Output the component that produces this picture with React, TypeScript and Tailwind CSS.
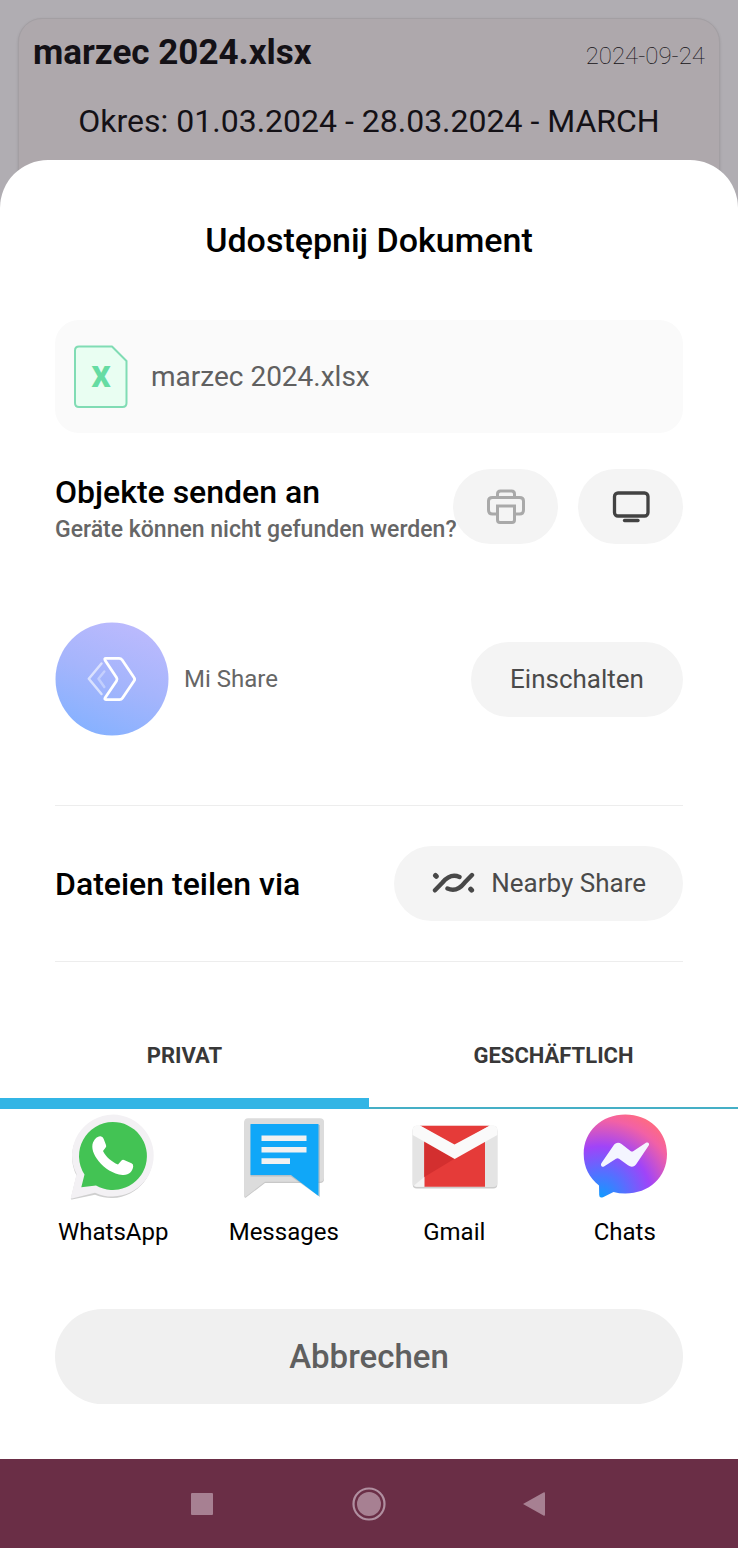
import React from "react";

function SheetFileIcon() {
  return (
    <div className="relative h-16 w-14 shrink-0">
      <svg viewBox="0 0 56 64" className="h-16 w-14" aria-hidden="true">
        <path
          d="M6 1.500H39L53.500 16V58Q53.500 62 49.500 62H6Q2 62 2 58V5.500Q2 1.500 6 1.500Z"
          fill="#e9fef2"
          stroke="#80dcb4"
          strokeWidth="2"
          strokeLinejoin="round"
        />
      </svg>
      <span className="absolute inset-0 flex items-center justify-center text-3xl font-black text-[#66dca3]">
        X
      </span>
    </div>
  );
}

function PrinterIcon() {
  return (
    <svg viewBox="0 0 40 36" className="h-9 w-10" fill="none" stroke="#a9a9a9" strokeWidth="3" aria-hidden="true">
      <path d="M11.500 8V5Q11.500 2 14.500 2H25.500Q28.500 2 28.500 5V8" />
      <path d="M10.500 25H6.500Q2.500 25 2.500 21V12Q2.500 8.500 6.500 8.500H33.500Q37.500 8.500 37.500 12V21Q37.500 25 33.500 25H29.500" />
      <path d="M11.500 17H28.500V31Q28.500 33.500 26 33.500H14Q11.500 33.500 11.500 31Z" />
    </svg>
  );
}

function ScreenIcon() {
  return (
    <svg viewBox="0 0 40 36" className="h-9 w-10" fill="none" stroke="#424242" strokeWidth="3.300" aria-hidden="true">
      <rect x="3.500" y="4" width="33.500" height="23" rx="3.500" />
      <path d="M13.500 31.500H27" strokeLinecap="round" />
    </svg>
  );
}

function MiShareIcon() {
  return (
    <svg viewBox="0 0 114 114" className="size-[114px] shrink-0" fill="none" aria-hidden="true">
      <defs>
        <linearGradient id="mi" x1="0.700" y1="0" x2="0.300" y2="1">
          <stop offset="0" stopColor="#bcbafd" />
          <stop offset="0.500" stopColor="#a5b5fc" />
          <stop offset="1" stopColor="#85b1ff" />
        </linearGradient>
      </defs>
      <circle cx="57" cy="57" r="56.500" fill="url(#mi)" />
      <g strokeLinecap="round" strokeLinejoin="round">
        <path d="M49.300 49.500L43.500 56.700L49.300 65" stroke="#fff" strokeOpacity="0.350" strokeWidth="2.500" />
        <path d="M46.500 41.500L33.800 56.700L46.500 72" stroke="#fff" strokeOpacity="0.600" strokeWidth="2.500" />
        <path
          d="M51 36.300H64Q66 36.300 67.200 38L79 55.500Q80.300 57.300 79 59L67.500 76Q66.500 77.600 64.500 77.600H51Q49 77.600 50.300 75.500L61.500 59Q62.700 57.300 61.500 55.500L50.200 38.500Q49 36.300 51 36.300Z"
          stroke="#fff"
          strokeWidth="2.800"
        />
      </g>
    </svg>
  );
}

function NearbyIcon() {
  return (
    <svg viewBox="0 0 44 24" className="h-6 w-11" fill="none" stroke="#484848" strokeLinecap="round" aria-hidden="true">
      <path d="M4 18.300L11.500 10.500C17 4 23 2.500 28.500 5" strokeWidth="4.400" />
      <path d="M41 3L33.500 10.800C28 17.700 22 19 16.500 16.500" strokeWidth="4.400" />
      <path d="M4.500 3.500L5.300 4.300M39.700 17.200L40.600 18.200" strokeWidth="5" />
    </svg>
  );
}

function WhatsAppIcon() {
  return (
    <svg viewBox="0 0 88 88" className="size-[88px]" aria-hidden="true">
      <path
        d="M44 4A41.500 41 0 1 1 26 82.700L3 87.500Q1.500 87.500 2 86L7.500 63.500A41.500 41 0 0 1 44 4Z"
        fill="#cfcfcf"
      />
      <path
        d="M44 2.500A41.500 41 0 1 1 26 80.800L3 86.500Q1.500 86.500 2 85L7.500 62A41.500 41 0 0 1 44 2.500Z"
        fill="#f3f1f4"
      />
      <path d="M43.700 10A34 34 0 1 1 27 73.500L12.300 75.300L15.500 62.500A34 34 0 0 1 43.700 10Z" fill="#43c354" />
      <path
        d="M24 30.500C26 26 29 24 31.500 24.300Q33.800 24.500 34.600 26.700L37 33Q37.600 34.500 36.500 35.800L34 39C37 45 42.500 49.800 49 52.500L52.500 48.500Q53.500 47.500 55 48L62.500 51.300Q64.500 52.200 64.200 54.500C63.500 59.500 60 63.500 53.500 63C44 62 35.500 56.500 29.500 49C24.500 42.500 22 36 24 30.500Z"
        fill="#fff"
      />
    </svg>
  );
}

function MessagesIcon() {
  return (
    <svg viewBox="0 0 88 88" className="size-[88px]" aria-hidden="true">
      <path d="M8 7.500H80Q84 7.500 84 11V67Q84 71 80 71H25L6 85.500Q4.300 86.500 4.300 84V11Q4.300 7.500 8 7.500Z" fill="#c8c8c8" />
      <path d="M8 6.300H80Q84 6.300 84 10V66Q84 69.700 80 69.700H25L6 84.500Q4.300 85.500 4.300 83V10Q4.300 6.300 8 6.300Z" fill="#dcdcdc" />
      <path d="M10.500 13H80V85L51 64.500H10.500Z" fill="#8da5b4" opacity="0.500" />
      <path d="M10.500 12H78.500V84L51 63H10.500Z" fill="#10a7f8" />
      <path d="M21.500 23.500H66.500V29H21.500ZM21.500 35H66.500V40.500H21.500ZM21.500 46.300H50V52H21.500Z" fill="#f1f1f1" />
    </svg>
  );
}

function GmailIcon() {
  return (
    <svg viewBox="0 0 88 88" className="size-[88px]" aria-hidden="true">
      <rect x="2.700" y="15" width="84.600" height="61.500" rx="4" fill="#cccccc" />
      <rect x="2.700" y="13.700" width="84.600" height="61.300" rx="4" fill="#e4e4e4" />
      <path d="M14.300 28H75V74.800H14.300Z" fill="#e53b39" />
      <path d="M14.300 30L44.500 46.700L14.300 65Z" fill="#d32f2f" />
      <path d="M4 73.500L14.300 65V74.800H6Z" fill="#f4f4f4" />
      <path d="M10 13.700H79.500L44.700 34Z" fill="#e53b39" />
      <path
        d="M2.700 23V18Q2.700 13.700 7 13.700H10.500L44.500 32.500L79.500 13.700H83Q87.300 13.700 87.300 18V23L44.700 47Z"
        fill="#fafafa"
      />
    </svg>
  );
}

function MessengerIcon() {
  return (
    <svg viewBox="0 0 88 88" className="size-[88px]" aria-hidden="true">
      <defs>
        <radialGradient id="chat" cx="0.200" cy="1" r="1.100">
          <stop offset="0" stopColor="#0f9bff" />
          <stop offset="0.300" stopColor="#5b6cff" />
          <stop offset="0.560" stopColor="#a044f8" />
          <stop offset="0.850" stopColor="#f261a5" />
          <stop offset="1" stopColor="#ff6b80" />
        </radialGradient>
      </defs>
      <path
        d="M44.300 2.500C68 2.500 86 19 86 42C86 65.500 68 81.500 44.300 81.500Q38 81.500 32.500 80L22 85.200Q18.300 86.500 18.200 83L18 73.500C8.500 66 2.700 55.500 2.700 42C2.700 19 20.500 2.500 44.300 2.500Z"
        fill="url(#chat)"
      />
      <path
        d="M20.500 51L32.500 33.500C34.500 30.500 37.700 30 40.500 32L49.500 39Q51 40 52.500 39L65 30.800C67 29.500 69 31.500 67.700 33.500L55.500 51.800C53.500 55 50 55.500 47 53.300L38 46.700Q36.500 45.700 35 46.700L23 54.400C21 55.700 19 53.300 20.500 51Z"
        fill="#f4f5ff"
      />
    </svg>
  );
}

const apps = [
  { name: "WhatsApp", Icon: WhatsAppIcon },
  { name: "Messages", Icon: MessagesIcon },
  { name: "Gmail", Icon: GmailIcon },
  { name: "Chats", Icon: MessengerIcon },
];

export default function App() {
  return (
    <div className="flex min-h-screen flex-col bg-[#b0adb2] font-['Roboto',sans-serif] text-black">
      <header className="px-[18px] pt-[18px]">
        <article className="rounded-3xl border border-[#a39fa3] bg-[#aea8ac] px-3.5 pb-[70px] text-[#141116] shadow-sm">
          <div className="flex items-center justify-between pt-3.5">
            <h1 className="text-[35px] leading-10 font-bold">marzec 2024.xlsx</h1>
            <time className="pt-1.5 text-2xl font-thin">2024-09-24</time>
          </div>
          <p className="pt-7 text-center text-[32px] leading-10">Okres: 01.03.2024 - 28.03.2024 - MARCH</p>
        </article>
      </header>

      <main className="relative -mt-[52px] flex-1 rounded-t-[48px] bg-white pt-[60px] pb-[55px]">
        <div className="px-[55px]">
          <h2 className="text-center text-[34px] leading-10 font-medium">Udostępnij Dokument</h2>

          <div className="mt-[60px] flex h-[113px] items-center gap-[22px] rounded-3xl bg-[#fafafa] px-[18px] text-[28px] text-[#606060]">
            <SheetFileIcon />
            <span>marzec 2024.xlsx</span>
          </div>

          <section className="mt-9 flex h-[75px] items-center gap-5">
            <div className="min-w-0 flex-1 pt-1.5 whitespace-nowrap">
              <h3 className="text-[32px] leading-10 font-medium">Objekte senden an</h3>
              <p className="relative z-10 text-[23px] leading-9 font-medium text-[#666666]">
                Geräte können nicht gefunden werden?
              </p>
            </div>
            <button aria-label="Drucken" className="-ml-5 flex h-full w-[105px] items-center justify-center rounded-full bg-[#f4f4f4]">
              <PrinterIcon />
            </button>
            <button aria-label="Bildschirm" className="flex h-full w-[105px] items-center justify-center rounded-full bg-[#f4f4f4]">
              <ScreenIcon />
            </button>
          </section>

          <section className="mt-[78px] flex items-center gap-[15px]">
            <MiShareIcon />
            <span className="flex-1 text-2xl text-[#666666]">Mi Share</span>
            <button className="h-[75px] w-[212px] rounded-full bg-[#f4f4f4] text-[26px] text-[#4a4a4a]">Einschalten</button>
          </section>

          <section className="mt-[69px] flex items-center justify-between border-y border-[#ededed] py-10">
            <h3 className="text-[32px] font-medium">Dateien teilen via</h3>
            <button className="flex h-[75px] items-center gap-4 rounded-full bg-[#f4f4f4] px-[37px] text-[26px] text-[#4a4a4a]">
              <NearbyIcon />
              Nearby Share
            </button>
          </section>
        </div>

        <div role="tablist" className="mt-[50px] flex h-[97px] text-[22px] font-bold text-[#383838]">
          <button role="tab" aria-selected="true" className="flex-1 border-b-[11px] border-[#33b5e5]">
            PRIVAT
          </button>
          <button role="tab" aria-selected="false" className="flex-1 border-b-2 border-[#45afc6] pb-[9px]">
            GESCHÄFTLICH
          </button>
        </div>

        <div className="mt-[3px] grid grid-cols-4 px-7">
          {apps.map(({ name, Icon }) => (
            <button key={name} className="flex flex-col items-center gap-4 text-2xl">
              <Icon />
              {name}
            </button>
          ))}
        </div>

        <div className="px-[55px] pt-[61px]">
          <button className="h-[95px] w-full rounded-full bg-[#f0f0f0] text-[33px] font-medium text-[#5f5f5f]">Abbrechen</button>
        </div>
      </main>

      <nav className="flex h-[89px] items-center justify-center gap-[126px] bg-[#6a2e46]">
        <button aria-label="Übersicht" className="flex size-10 items-center justify-center">
          <svg viewBox="0 0 40 40" className="size-10" fill="#a78092" aria-hidden="true">
            <rect x="8" y="9" width="22" height="22" rx="1" />
          </svg>
        </button>
        <button aria-label="Startseite" className="flex size-10 items-center justify-center">
          <svg viewBox="0 0 40 40" className="size-10" fill="#a78092" aria-hidden="true">
            <circle cx="20" cy="20" r="12" />
            <circle cx="20" cy="20" r="15.500" fill="none" stroke="#b08fa0" strokeWidth="2.200" />
          </svg>
        </button>
        <button aria-label="Zurück" className="flex size-10 items-center justify-center">
          <svg viewBox="0 0 40 40" className="size-10" fill="#a78092" aria-hidden="true">
            <path d="M8 20L28.500 8.500Q30 7.800 30 9.500V30.500Q30 32.200 28.500 31.500Z" />
          </svg>
        </button>
      </nav>
    </div>
  );
}
